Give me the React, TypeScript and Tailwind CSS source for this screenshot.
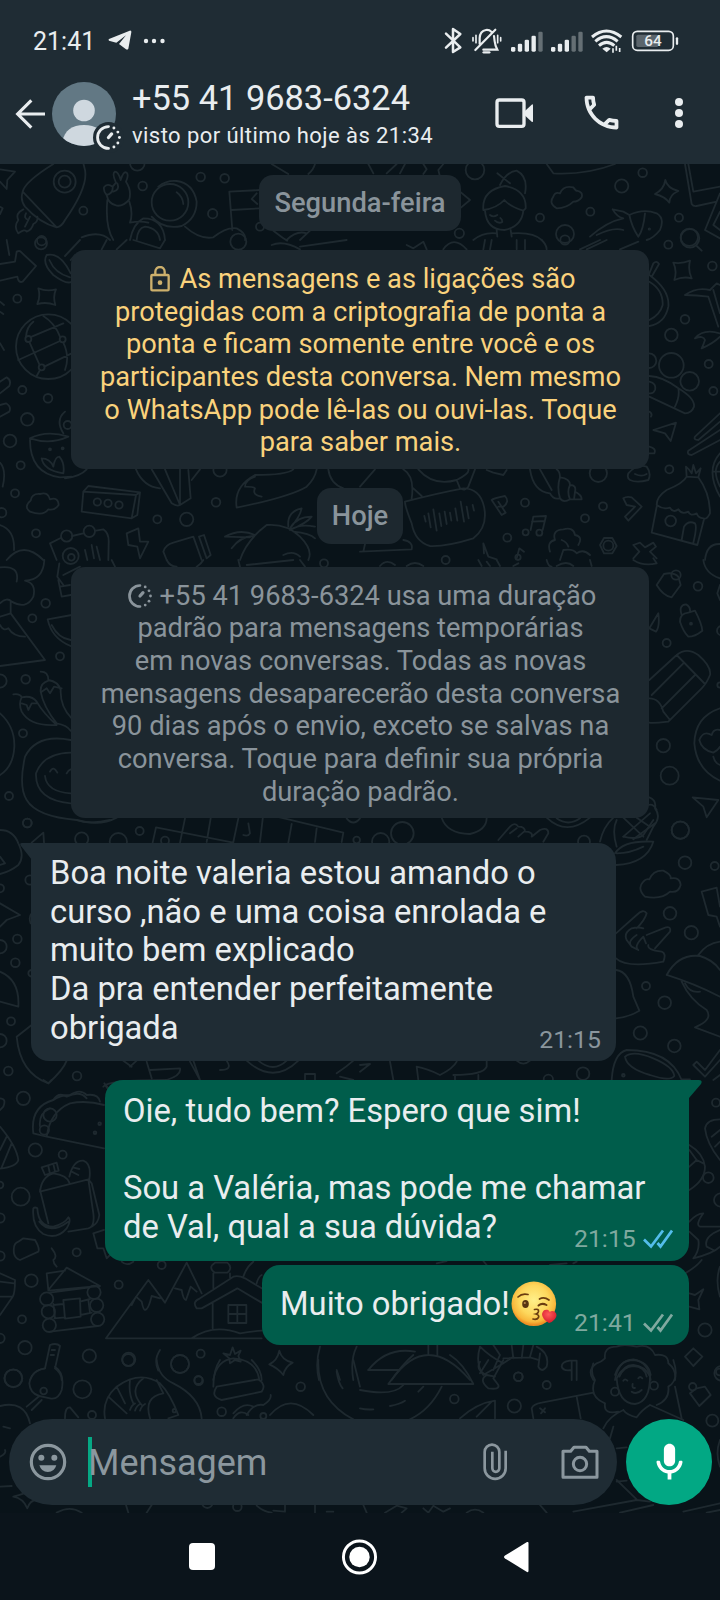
import React from 'react';

type Circle = [number, number, number];

interface DoodleTile {
  x: number;
  y: number;
  d: string;
  circles: Circle[];
}

// Wallpaper doodles, every tile is drawn at three times its size
const tiles: DoodleTile[] = [
  {
    x: 0,
    y: 0,
    d: 'M0 508L45 515L22 540L20 567L0 545M0 620L8 625L0 642M160 492Q75 545 68 575Q60 600 75 620Q120 670 170 682Q185 680 195 660Q265 560 255 510L250 490M68 575L170 682M70 628Q45 640 55 660Q40 680 55 700Q75 685 80 695Q95 690 100 672Q115 665 112 650M78 640Q70 655 85 660M90 650Q80 670 75 680M320 585Q310 575 312 562Q322 548 338 560L348 548Q335 520 345 515Q355 515 362 540Q370 512 380 518Q387 525 378 545Q395 570 388 598Q370 620 350 617Q325 612 320 585ZM320 585q20 -5 18 -25M340 575q20 -5 12 -25M322 600Q315 680 340 720M388 605Q400 640 390 668Q420 662 445 668M530 577Q548 590 550 612M455 650Q490 690 545 678Q590 655 590 605Q580 550 530 543Q500 540 475 560M390 720Q400 670 430 655Q490 655 495 720M410 720Q412 685 435 680Q475 685 480 720M555 680Q600 720 640 712Q680 680 710 685Q740 700 735 720M688 575L780 570M695 630L780 625M688 575L697 690M770 580L755 597L772 612M815 492L865 522M945 492Q940 510 925 522M245 712Q300 690 330 720M820 692Q870 730 860 720Q890 690 920 700M930 692L900 720',
    circles: [[194, 545, 33], [194, 545, 18], [510, 607, 55], [250, 632, 12], [428, 558, 13], [602, 531, 13], [674, 535, 13], [638, 641, 14], [125, 722, 14], [412, 490, 22], [780, 680, 12]],
  },
  {
    x: 360,
    y: 0,
    d: 'M25 492L40 520M80 520L110 492M120 520L135 492M190 492L200 508L190 522M250 492L235 510L240 530M300 575L330 600L300 625M560 492L580 520Q680 525 765 492M420 555Q440 515 470 512Q505 530 495 580M412 520L450 550M370 630Q365 570 435 558Q500 570 497 625L490 632Q450 620 433 600Q410 625 370 630M375 632Q380 690 433 690Q485 680 490 632M390 645q10 8 22 0M405 662q10 10 22 4q0 -8 -6 -12M410 690L412 710M452 690L455 710M340 720Q370 695 410 700M455 700Q520 695 545 720M590 625Q565 610 580 590Q585 575 600 580Q610 555 640 562Q650 575 650 572Q670 575 665 592Q655 605 640 605Q620 625 590 625ZM916 540Q922 565 955 573Q928 585 928 608Q915 590 885 582Q912 568 916 540ZM758 628L790 635L808 645Q850 625 890 640Q915 655 900 690Q880 715 860 720M758 628Q770 650 790 655Q740 665 690 710M808 645Q815 680 835 710Q850 690 855 640M710 705Q760 680 790 690M975 492L995 612Q1000 620 1010 618L1070 605M985 492L1000 575L1080 560M1080 580L1035 690L1080 715M1080 635L1060 675L1080 690',
    circles: [[345, 510, 28], [848, 518, 13], [785, 558, 20], [691, 635, 12], [540, 653, 12], [615, 702, 27], [957, 653, 12], [988, 712, 26], [298, 700, 14], [868, 687, 2]],
  },
  {
    x: 0,
    y: 240,
    d: 'M20 0L28 45M0 72L45 65L50 35Q60 30 65 38L108 78L68 125Q55 130 52 110L0 122M140 45Q125 70 160 105Q200 135 215 125M140 45Q180 35 212 100M148 60Q165 100 210 112M195 48L240 0M212 60L225 45M305 28L320 0M350 28L380 0M400 0L480 25L495 0M815 15Q850 0 900 28M900 20L1040 0M115 145Q140 155 168 148Q158 168 166 195Q140 185 112 192Q122 170 115 145ZM95 290L190 250M55 360L180 303M88 306L118 373M190 308Q210 350 195 390M180 290Q165 250 130 228M78 290Q80 260 100 245M133 380L215 340M120 390L110 408M0 185L12 195M0 215L10 222M0 310L12 330M0 425L20 412Q35 420 28 438L0 460M0 495L18 490Q35 500 28 515L0 530M90 595Q140 570 205 590Q150 615 90 595M90 600Q90 700 180 712L215 710M125 655Q130 690 190 700M125 655Q150 655 160 680Q165 650 178 650Q195 670 190 700M195 515Q165 540 190 580M195 715Q240 710 260 688M0 668Q20 690 8 740M90 815Q70 800 92 782Q95 760 120 762Q145 755 150 778Q175 770 176 795Q165 812 145 808Q130 830 90 815ZM250 755L245 815L395 835L408 765ZM250 755L265 738L420 757L408 765M420 757L412 825L395 835M408 688Q430 740 480 745M455 688L515 790Q530 800 540 795L495 688M540 688V795L572 775L565 690M575 720L600 688M710 803Q870 770 920 740Q945 715 950 688M710 803Q700 740 765 705M765 710q-30 10 -30 30q25 0 30 5q-10 20 20 25M765 705Q860 705 880 688M985 688Q990 730 1030 745M182 894L150 910L170 960M216 888L250 880M288 872L310 868Q328 880 326 910L325 960M255 930L262 960M275 915L282 955M290 920L300 960M380 880L415 865L420 905L445 905L420 955L412 920L385 915ZM0 855Q45 870 42 930M20 960Q70 900 130 960M500 960L490 935Q495 915 520 908L580 890L605 960M597 890L612 885L632 945L620 955ZM675 890Q720 865 765 885M675 890L750 892M695 925Q720 890 760 888M720 960Q740 900 800 855Q860 850 900 890Q940 930 925 960M865 860Q860 815 905 805Q900 830 870 865M870 865Q890 830 935 830Q920 850 870 870M870 870Q900 850 945 860M880 875Q930 880 945 895M850 945Q880 930 900 950',
    circles: [[145, 320, 97], [85, 297, 9], [188, 298, 9], [125, 382, 9], [203, 555, 12], [150, 628, 3], [188, 625, 3], [123, 10, 18], [715, 5, 24], [52, 176, 12], [67, 450, 12], [144, 475, 13], [82, 538, 19], [30, 603, 19], [62, 676, 12], [45, 760, 12], [108, 880, 12], [472, 838, 12], [560, 838, 20], [648, 787, 13], [5, 818, 14], [660, 690, 20], [292, 786, 11], [324, 790, 11], [357, 795, 11], [200, 888, 17], [268, 874, 17], [212, 948, 24], [214, 952, 10]],
  },
  {
    x: 360,
    y: 240,
    d: 'M140 15L160 25L190 5L200 28M250 28Q280 -15 320 28M370 28L375 0M395 0L390 28M470 28V0M495 28V0M545 0Q560 15 560 28M660 28L720 0M680 28L740 0M780 28L835 5M1010 18L1025 32M940 68Q965 72 990 62Q983 90 995 115Q970 108 943 120Q952 92 940 68ZM868 100L880 70Q890 60 897 72L875 110M868 125Q910 150 908 195Q900 225 868 240M868 105Q930 150 925 200Q915 250 868 258M975 165Q1010 140 1050 150L1070 130L1080 135M975 165Q1010 165 1045 170L1075 260M1060 150L1080 220M1005 295Q1030 265 1080 280M1005 295Q1030 285 1035 300Q1030 315 1025 325Q1060 310 1080 290M868 408Q910 410 955 445Q1005 475 1002 500Q995 520 975 520L868 470M955 445Q960 470 945 500M868 425Q890 430 885 450Q880 462 868 460M868 515q10 5 5 15M880 570L948 548L932 603L915 580ZM1080 520L1005 590Q1000 600 1015 600L1080 545M1080 570L985 632Q980 645 995 645L1080 600M868 620Q890 625 883 640L868 640M805 700Q830 670 860 680Q875 700 865 720Q830 730 810 720Q800 715 805 700M825 702q20 10 35 0M1080 640Q1035 690 1080 770M1080 665Q1055 690 1080 740M1062 695H1080M510 688Q520 755 570 760Q580 780 600 775Q610 790 630 778L665 778Q665 765 645 755Q650 735 630 735Q630 715 600 712Q600 695 590 688M540 688L575 750M600 712Q590 740 600 775M630 735Q620 755 630 778M645 755L642 778M890 795Q890 770 920 750Q970 730 980 710L1015 712Q1050 760 1050 820Q1040 840 1030 835Q1015 835 1010 820Q990 830 985 815Q965 825 955 808Q940 820 930 803Q910 810 890 795M890 800L875 878L1012 915L1032 838M965 900L972 860Q985 840 1005 850Q1012 860 1000 908M980 710L978 680Q990 690 995 700L1000 675L1008 700L1022 685L1015 712M135 785Q230 760 310 745Q360 745 372 800Q385 860 340 895Q260 920 210 918Q165 905 155 850Q135 800 135 785M193 828L197 845M205 820L212 862M220 808L230 872M238 820L244 858M254 815L260 852M270 818L274 842M286 805L292 842M302 785L312 845M320 800L326 835M338 795L342 812M130 688Q165 710 155 775M160 745L185 768M175 688Q220 740 290 720Q330 700 325 688M290 720L300 745Q315 755 325 740L345 688M45 688L0 740M380 690L400 698L430 705L440 690M395 780Q400 775 435 768Q450 785 430 800L415 800M395 780L425 825L437 818L415 785M512 870L520 830L558 828L548 870M516 845L555 843M790 775Q800 768 815 772L845 800L805 842L795 830L825 800L800 795ZM570 935Q560 905 585 900Q575 870 610 868Q640 860 645 885Q670 890 655 915M600 960L610 930Q640 925 650 940Q670 925 690 945M605 900Q620 905 625 920M720 915L732 894L757 894L770 918L757 940L732 940ZM820 915L840 908L855 922L880 908L888 920L870 935L890 955M820 915L838 935L820 955M1035 960Q1040 910 1080 912M0 935L155 928Q160 905 130 900M10 935L15 912M370 910L385 950L410 958M370 910L372 940M470 955L478 925L492 935',
    circles: [[990, -5, 28], [925, 14, 12], [1057, 78, 13], [975, 238, 13], [934, 285, 19], [934, 376, 37], [989, 424, 28], [1046, 372, 12], [1060, 453, 12], [928, 688, 12], [495, 788, 12], [729, 799, 12], [675, 835, 12], [442, 893, 12], [867, 362, 22], [715, 700, 26], [932, 843, 16], [497, 877, 9], [538, 878, 9], [745, 917, 15], [474, 952, 8], [615, 0, 14]],
  },
  {
    x: 0,
    y: 560,
    d: 'M0 170L32 160L135 300L0 318M32 160V125M0 130Q20 110 35 125Q80 150 100 110Q110 70 75 62Q130 60 133 0M0 22Q60 15 50 65M0 195Q10 215 25 205Q40 230 75 230M178 10L172 50L190 75M175 60L185 110L212 105M180 80L210 75M190 45L240 20M143 178L215 165M143 178Q155 235 212 258M155 195Q175 235 212 240M122 335Q145 335 145 360Q175 365 182 390Q180 440 215 475M122 395Q120 370 145 362M122 395Q130 440 170 490Q200 495 212 512M40 403Q60 400 65 412Q95 405 110 425Q130 460 170 495Q90 500 65 455Q55 430 65 412M125 395L140 385L150 400L162 380L185 385M65 430L80 435L85 450L95 430L110 430M0 460Q45 500 43 560Q40 620 0 645M212 540Q110 520 75 590Q55 680 80 720Q110 770 230 780Q300 800 350 773M212 578Q130 580 108 640Q105 720 212 730M135 648Q140 695 212 700M150 635Q160 615 172 638M200 640Q205 630 212 628M345 20L335 0M500 0Q510 20 530 20M590 20Q605 10 610 0M715 0L720 20M740 15L880 0M900 0L915 20',
    circles: [[137, 130, 13], [97, 175, 12], [180, 289, 12], [77, 358, 13], [0, 363, 20], [69, 520, 12], [27, 708, 12], [82, 789, 13], [972, 10, 12]],
  },
  {
    x: 360,
    y: 560,
    d: 'M60 18Q80 -5 105 15M140 18Q165 0 190 18M355 0L365 18M380 5L390 18M410 0L420 18M460 18L475 10M560 0Q565 20 575 20M590 18Q620 0 640 18M690 0L695 18M820 0Q850 20 890 10L880 -5M1030 0Q1035 40 1080 55M890 75L912 42Q940 35 955 50L962 75L935 112Q910 108 890 75ZM960 185Q960 160 985 158L1005 152Q1025 190 1027 212Q1005 230 985 230Q970 215 960 185ZM965 165Q955 135 978 133Q992 140 990 155M868 205L895 160Q900 200 888 215ZM868 360L950 285Q980 260 1015 285Q1055 320 1050 345Q1040 370 1025 385L925 485Q880 490 868 488M868 415Q900 415 910 455L930 480M950 285L1035 372M970 310L875 405M1005 345L905 445M1080 445Q1005 470 1003 550Q1010 630 1080 662M1080 510Q1060 505 1055 525Q1030 510 1018 540Q1025 570 1060 578Q1075 570 1080 560M1060 590Q1065 610 1080 615M1080 75L1072 100L1080 120M998 712L1075 720L1040 772L1030 740ZM868 712Q890 720 885 745Q905 770 880 800L860 840M865 735Q880 730 890 750M720 845Q730 800 760 773M770 780Q755 810 770 860M790 773L850 830M830 773L870 800M870 760L790 830M885 790L820 838M245 773Q260 820 330 822Q380 810 380 773M560 773Q620 830 690 773M590 775q35 25 70 0M415 840L450 800Q465 785 475 800Q495 800 495 815Q520 815 515 830L540 810Q565 800 565 820L550 845M450 820L470 805M475 830L492 815',
    circles: [[257, 0, 12], [1014, 79, 13], [1085, 212, 14], [1080, 375, 8], [920, 249, 12], [910, 557, 20], [929, 647, 27], [961, 811, 26], [672, 845, 18], [127, 820, 34], [62, 845, 26], [948, 45, 14], [993, 191, 3]],
  },
  {
    x: 0,
    y: 820,
    d: 'M0 30Q40 30 55 70Q75 110 55 135Q30 155 0 162M0 110L15 130L0 135M95 68L130 38L132 68M458 68L468 22L700 68M555 -5L540 68M632 -5L620 66M715 -5L700 66M790 -20L780 66M790 -20L1030 38L1025 66M875 12L865 68M950 25L945 66M745 10L750 40Q745 50 730 45M1040 -5Q1060 20 1080 -5M230 0Q270 15 330 0M0 250L60 285L20 300L0 320M0 455Q60 480 55 560L0 545M95 280Q85 290 92 310M95 615L50 650Q60 760 145 790Q190 750 200 722M310 800Q320 780 500 780Q545 765 540 745L450 750M440 725L455 775M390 740L410 722M315 795L330 815M370 722L395 740M570 725L600 780L580 722M680 722Q700 750 660 750M740 722Q820 795 895 722M775 722Q820 760 860 722M915 780L915 762L945 762L945 780M1010 760Q1040 740 1060 722M1020 770L1060 780M160 840Q175 815 200 830Q240 810 260 835',
    circles: [[419, 33, 12], [245, 57, 20], [355, 65, 26], [82, 9, 13], [495, 62, 12], [0, 205, 12], [90, 180, 14], [52, 357, 13], [0, 380, 20], [46, 428, 13], [33, 604, 12], [0, 662, 20], [25, 753, 13], [231, 768, 13], [95, 460, 10], [1070, 60, 10]],
  },
  {
    x: 360,
    y: 820,
    d: 'M855 230Q830 205 850 185Q858 175 868 178Q880 150 910 152Q935 165 932 175Q960 170 962 195Q955 220 930 215Q905 240 855 230M765 100Q790 60 880 65Q860 130 768 135M770 100Q810 100 850 80M790 50Q830 60 850 45L880 0M1025 215L1070 203L1080 260M1025 215L1045 285L1070 290L1080 320M768 340L830 285Q850 265 860 280Q855 300 830 325M800 360Q790 340 815 325Q835 320 850 325M815 380Q800 365 830 345M835 390Q820 380 850 350L858 370M800 360L815 380L835 390M860 345L910 325Q935 315 930 335L885 385M768 415Q800 445 910 425Q920 400 905 395Q860 390 865 375M768 450Q810 455 820 530L838 572Q810 590 768 595M920 465Q955 400 1020 408Q1060 420 1080 450M920 465Q1000 490 1080 530M1015 405Q1040 370 1080 365M965 485Q990 540 1040 570Q1060 600 1005 622L1080 650M975 490Q990 520 1020 515M1080 690L1035 750L1010 725L1000 735L1035 770L1080 720M755 780Q760 700 800 690Q930 690 965 780M795 710Q820 690 880 715Q940 740 943 768Q930 785 870 765Q800 745 795 710ZM965 778H990M0 735L30 732L0 755M90 725L100 780M170 740L175 780M170 740Q200 745 240 765Q280 745 290 725M280 765Q370 765 380 740L380 722M285 765V780M355 765V780M470 722Q490 740 510 722M1060 780L1080 765',
    circles: [[961, 30, 26], [975, 128, 19], [1064, 138, 12], [930, 280, 19], [994, 338, 20], [858, 498, 12], [914, 548, 19], [841, 639, 20], [943, 678, 19], [669, 761, 19], [790, 766, 4], [565, 778, 14]],
  },
  {
    x: 0,
    y: 1080,
    d: 'M130 0L145 10L155 0M0 55Q20 55 10 80L0 90M100 160Q90 80 160 60Q180 45 210 45Q240 25 260 45Q295 40 300 65M100 160L140 170Q150 95 210 70Q260 60 312 75M140 170L312 205M120 140Q115 100 150 85M0 140Q50 200 55 240Q50 260 0 266M20 170L0 210M35 190L5 262M313 10L330 30M120 335Q125 290 160 280Q200 285 208 308M120 335L265 298L280 400Q285 440 265 445L205 455M120 330L145 430M265 298L275 310L298 405Q295 430 275 440M125 262L170 248L176 272L135 285ZM145 258l5 24M160 252l5 22M208 290Q220 240 250 242Q275 250 268 298M215 275l20 10M218 262l20 5M100 385Q105 380 112 385Q115 440 160 440Q195 430 205 412Q215 420 200 445Q170 480 130 462Q95 440 100 385M118 425Q150 465 205 425M42 520Q38 490 55 485L70 475L105 480Q120 505 115 515L60 540Q45 535 42 520ZM312 450L280 460L292 505L310 505L320 535L330 525M365 545Q380 560 400 545M155 505Q175 530 160 540Q160 550 170 560M140 580L195 572M145 630L200 563L300 618L145 632ZM140 580L145 630M150 638L270 622M160 675L190 672M240 665L270 657M163 715L195 712M242 705L275 698M150 755L293 738M160 672L165 715M265 660L270 698M190 660L240 655L242 710L195 716ZM0 580L45 600Q45 640 38 650L0 705M0 605L42 610M0 650H38M318 775L445 600L495 668L560 548L605 640M318 775H785M395 675L408 650L425 665Q430 690 435 690Q445 690 455 648L480 655M525 625L545 630Q550 660 558 660L572 620L590 635M590 685Q575 665 600 655L700 590Q715 585 735 595L785 625M590 685L605 685L712 625L785 668M638 670V745M685 675h54v54h-54ZM712 675v54M685 702h54M575 775Q640 730 720 760Q750 755 785 752M640 580V625M690 580V592M645 548H682Q700 563 682 578H645Q622 563 645 548M730 590Q740 560 760 545M770 610Q775 590 785 585M135 865L150 795Q170 788 180 798L165 865M155 810h10M152 825h10M135 865Q100 870 90 900M165 865Q185 880 185 900M480 810Q460 840 475 872M640 900Q650 840 700 835Q770 840 778 900M670 820L690 825L698 802L705 822L722 812L715 828L722 845L705 840L690 850L688 835ZM838 812Q845 840 878 848Q855 860 850 885Q835 865 808 853Q832 842 838 812ZM960 800Q945 850 957 900M1070 800Q1050 840 1060 900M1010 870L1020 900',
    circles: [[70, 55, 20], [106, 210, 20], [188, 224, 12], [62, 350, 27], [230, 517, 12], [0, 414, 14], [0, 315, 10], [0, 528, 14], [94, 602, 19], [356, 614, 12], [66, 718, 12], [0, 775, 14], [75, 803, 20], [268, 828, 20], [386, 838, 20], [485, 555, 12], [540, 852, 27], [602, 821, 12], [40, 895, 26], [595, 900, 12], [150, 105, 20], [133, 150, 14], [299, 131, 4], [285, 158, 4], [140, 657, 20], [282, 637, 20], [145, 695, 20], [290, 676, 20], [148, 736, 20], [293, 718, 20]],
  },
  {
    x: 360,
    y: 1080,
    d: 'M1035 145Q1040 118 1080 118M1035 145Q1040 190 1080 240M1055 170L1080 150M1065 200L1080 185M988 195Q1030 220 1035 260Q1035 300 988 330M988 210L1010 240L988 260M1010 240L1030 250M988 425Q1010 400 1030 400Q1005 435 1020 440L1080 440M988 455L1015 480Q1020 510 1000 535M1080 450Q1030 470 1040 500L1060 510M1000 535Q1060 520 1080 500M975 580Q1010 560 1025 540M1080 560Q1065 600 1080 650M988 640L1005 645L1030 628L1015 660L1018 688L988 680M975 830L1000 805L1027 830L1000 858ZM25 870Q80 800 165 815M25 870H110M95 900Q200 750 330 900M205 795V825M232 795V825M360 800Q345 850 370 885L430 850L460 830M360 800Q390 830 430 850M400 795L420 825L400 870M530 800Q570 820 560 860Q545 880 535 860L540 820M430 835L510 832L535 840M455 795L460 835M490 795L485 835M520 795L510 830M650 842H630Q605 845 605 860Q610 875 635 870M635 842V900M650 842V900M700 900Q680 870 710 850Q725 845 735 835Q730 800 770 800Q790 790 830 800Q870 790 885 825Q925 820 925 850Q950 870 945 900M765 900Q775 840 820 838Q865 845 872 900M778 890Q790 860 820 858Q855 860 860 890M230 550L260 543M370 543L380 555M570 555L620 550M640 550L650 545',
    circles: [[1068, 68, 12], [1045, 293, 16], [1035, 750, 20], [475, 890, 13], [1082, 360, 20], [1085, 880, 22]],
  },
  {
    x: 0,
    y: 1360,
    d: 'M165 20Q195 40 185 90Q175 120 150 115L118 108M135 25Q95 30 88 70Q90 100 118 108L80 140M125 120L95 150M470 0Q475 50 520 70Q600 110 605 175M0 138Q75 120 90 190M10 200L30 205M0 290Q20 280 15 270M0 380L35 378M195 175Q195 140 210 142L235 172M315 175Q305 120 350 80Q420 30 480 70Q510 100 535 165L505 175M350 80L375 130M325 110L380 160M390 60Q385 100 400 130M430 55Q385 90 425 135M450 175Q430 110 490 100L470 60M390 150q5 -15 15 -20M405 152q5 -15 15 -20M420 152q5 -15 15 -20M640 80Q640 30 660 0M755 0Q785 30 785 60M650 80L775 58Q800 75 785 95L665 120Q630 110 650 80M700 175Q720 145 745 165M740 165Q760 130 790 135Q815 120 812 105M700 160Q730 125 760 140M810 165Q870 95 940 165M955 0Q950 120 1060 178M1010 35Q1015 70 1028 85M1060 0L1080 80M40 410Q75 400 90 395M40 410Q70 415 82 445Q90 420 110 420M170 458Q210 435 245 458M378 435L385 458M455 435L440 458M770 437Q790 455 815 458M820 452L855 455V435M945 435V458M980 455h20',
    circles: [[131, 93, 10], [40, 55, 27], [247, 88, 27], [385, 0, 18], [540, 12, 27], [596, 62, 13], [902, 80, 13], [665, 155, 13], [276, 165, 12], [622, 428, 16], [712, 440, 13], [523, 152, 5], [790, 168, 9]],
  },
  {
    x: 360,
    y: 1360,
    d: 'M25 30H115M85 72Q130 10 160 -15M85 72H340Q310 10 270 -15M0 90Q100 110 130 75M0 145Q20 150 40 148M245 80Q210 150 150 178M90 138Q120 132 135 122M175 95L190 80M300 175Q350 130 405 122L405 175M350 170L395 125M360 5Q345 30 380 45Q355 60 385 85Q420 90 415 75L400 55L430 0M385 0L360 40M380 45L405 50M520 175L515 145Q520 132 545 128L700 98M650 110L662 175M540 145l15 12M555 145l-12 15M765 45Q780 0 820 0Q865 5 872 45M770 55Q775 130 825 132Q870 125 870 50M770 55Q790 15 820 15Q855 18 870 50M700 10Q690 40 705 60Q685 110 735 130Q730 165 775 155M940 0Q960 60 925 80Q930 120 890 135M790 62q5 -8 12 0M835 55q5 -8 12 0M815 95Q830 105 845 90M818 72Q815 85 825 84M790 150Q800 165 830 172Q845 150 870 135M730 205Q745 170 790 150M870 135L970 180M750 235L760 200M770 265L800 262M945 80L965 175M990 100L1010 85L1035 80L1052 105L1018 138ZM770 360L830 418M770 365L800 362M640 455L830 420L870 425M780 458L880 435M970 455L1080 430M1040 458L1080 450M1080 240Q1065 280 1080 320M10 435L20 458M75 458L110 437L140 445L125 458M190 445L205 458L220 437L250 455L270 445M320 458Q345 440 370 458M540 435L560 458',
    circles: [[475, 50, 13], [560, 75, 12], [463, 138, 20], [283, 117, 13], [998, 80, 11], [1057, 182, 18], [1078, 36, 10], [765, 95, 12], [882, 77, 12]],
  },
];

function Wallpaper() {
  return (
    <svg className="absolute inset-0" width="720" height="1513" viewBox="0 0 720 1513" fill="none" stroke="#1e292f" aria-hidden="true">
      {tiles.map((t) => (
        <g key={`${t.x}-${t.y}`} transform={`translate(${t.x} ${t.y}) scale(0.33333)`} strokeWidth="5.5" strokeLinecap="round" strokeLinejoin="round">
          <path d={t.d} />
          {t.circles.map(([cx, cy, r], i) => (
            <circle key={i} cx={cx} cy={cy} r={r} />
          ))}
        </g>
      ))}
    </svg>
  );
}

function TimerIcon({ size, className }: { size: number; className?: string }) {
  return (
    <svg width={size} height={size} viewBox="0 0 24 24" fill="none" stroke="currentColor" strokeLinecap="round" className={className}>
      <path d="M12 1.5a10.5 10.5 0 0 0 0 21" strokeWidth="2.7" />
      <path d="M12 12l3-3.4" strokeWidth="3.2" />
      <g fill="currentColor" stroke="none">
        <circle cx="17.2" cy="2.9" r="1.4" />
        <circle cx="21" cy="6.8" r="1.4" />
        <circle cx="22.5" cy="12" r="1.4" />
        <circle cx="21" cy="17.2" r="1.4" />
        <circle cx="17.2" cy="21.1" r="1.4" />
      </g>
    </svg>
  );
}

function Signal({ bars }: { bars: number }) {
  const heights = [14, 24, 36, 48, 60];
  return (
    <svg width="40" height="27" viewBox="0 79 120 81" fill="#e9edef">
      {heights.map((h, i) => (
        <rect key={i} x={12 + i * 20.5} y={153 - h} width="13" height={h} rx="4" opacity={i < bars ? 1 : 0.35} />
      ))}
    </svg>
  );
}

function StatusBar() {
  return (
    <div className="flex h-[81px] items-center pl-[33px] pr-[40px]">
      <span className="mt-[2px] text-[25px] leading-none text-[#e9edef]">21:41</span>
      <svg width="24" height="21" viewBox="325 92 72 63" fill="#e9edef" className="ml-[13px]">
        <path d="M328 119L390 94Q396 93 395 99L386 148Q383 153 378 149L358 134L379 108L350 130L328 124Q325 121 328 119Z" />
      </svg>
      <svg width="24" height="6" viewBox="0 0 24 6" fill="#e9edef" className="ml-[11px]">
        <circle cx="3" cy="3" r="2.2" />
        <circle cx="11" cy="3" r="2.2" />
        <circle cx="19.5" cy="3" r="2.2" />
      </svg>
      <div className="ml-auto flex items-center">
        <svg width="23" height="27" viewBox="252 79 69 81" fill="none" stroke="#e9edef" strokeWidth="7.5" strokeLinejoin="round" strokeLinecap="round">
          <path d="M258 99L301 140L279 154V85L301 100L258 141" />
        </svg>
        <svg width="40" height="27" viewBox="321 79 120 81" fill="none" stroke="#e9edef" strokeWidth="6.5" strokeLinecap="round">
          <path d="M339 111V121M413 104V126M422 111V121M348 104V126" strokeWidth="5" />
          <path d="M359 130V112Q360 91 378 88Q388 87 394 93M402 106Q403 120 407 136L412 147H370M406 87L346 148" />
          <path d="M371 155H388" strokeWidth="7" />
        </svg>
        <Signal bars={4} />
        <Signal bars={3} />
        <svg width="40" height="27" viewBox="681 79 120 81" fill="none" stroke="#e9edef" strokeWidth="9">
          <path d="M696 109Q739 73 784 109M706 122Q739 94 773 122M717 135Q740 115 763 135" />
          <path d="M727 144Q740 134 752 144L740 155Z" fill="#e9edef" stroke="none" />
          <path d="M759 143V156M769 135V150M779 142V154" strokeWidth="5" />
        </svg>
        <svg width="53" height="27" viewBox="801 79 159 81" fill="none">
          <rect x="818" y="92" width="122" height="57" rx="14" stroke="#e9edef" strokeWidth="5" />
          <rect x="829" y="102" width="66" height="37" rx="5" fill="#5b656c" />
          <path d="M951 113V129" stroke="#e9edef" strokeWidth="7" strokeLinecap="round" />
          <text x="879" y="137" textAnchor="middle" fontSize="46" fontWeight="500" fill="#e9edef">
            64
          </text>
        </svg>
      </div>
    </div>
  );
}

function ChatHeader() {
  return (
    <header className="relative z-10 h-[164px] bg-[#1f2c34]">
      <StatusBar />
      <div className="flex h-[66px] items-center pl-[15px]">
        <svg width="32" height="30" viewBox="45 295 96 90" fill="none" stroke="#e9edef" strokeWidth="9.5">
          <path d="M135 340H54M94 299L53 340L94 381" />
        </svg>
        <div className="relative ml-[5px]">
          <svg width="64" height="64" viewBox="0 0 64 64" className="block">
            <defs>
              <clipPath id="avatar">
                <circle cx="32" cy="32" r="32" />
              </clipPath>
            </defs>
            <g clipPath="url(#avatar)">
              <rect width="64" height="64" fill="#627884" />
              <circle cx="32" cy="28.5" r="10.8" fill="#cfd8df" />
              <path d="M10 60C13 48 20 43 32 43s19 5 22 17L48 66H12Z" fill="#cfd8df" />
            </g>
          </svg>
          <div className="absolute -right-[8px] -bottom-[7px] rounded-full bg-[#1f2c34] p-[3px]">
            <TimerIcon size={25} className="text-[#e9edef]" />
          </div>
        </div>
        <div className="ml-[16px] flex flex-col whitespace-nowrap text-[#e9edef]">
          <span className="-mt-[1px] text-[34.4px] leading-[40px]">+55 41 9683-6324</span>
          <span className="mt-[4px] text-[22px] leading-[28px] tracking-[0.43px]">visto por último hoje às 21:34</span>
        </div>
      </div>
    </header>
  );
}

function HeaderActions() {
  return (
    <div className="absolute top-[90px] right-[32px] z-20 flex items-center">
      <svg width="40" height="40" viewBox="402 280 120 120" fill="none" stroke="#e9edef">
        <rect x="411" y="301" width="81" height="79" rx="7" strokeWidth="10" />
        <path d="M494 335L515 315Q519 312 519 317V364Q519 369 515 366L494 347Z" fill="#e9edef" stroke="none" />
      </svg>
      <svg width="45" height="45" viewBox="0 0 24 24" fill="#e9edef" className="ml-[45px]">
        <path d="M6.54 5c.06.89.21 1.76.45 2.59l-1.2 1.2c-.41-1.2-.67-2.47-.76-3.79h1.51m9.86 12.02c.85.24 1.72.39 2.6.45v1.49c-1.32-.09-2.59-.35-3.8-.75l1.2-1.19M7.5 3H4c-.55 0-1 .45-1 1 0 9.39 7.61 17 17 17 .55 0 1-.45 1-1v-3.49c0-.55-.45-1-1-1-1.24 0-2.45-.2-3.57-.57-.1-.04-.21-.05-.31-.05-.26 0-.51.1-.71.29l-2.2 2.2c-2.83-1.45-5.15-3.76-6.59-6.59l2.2-2.2c.28-.28.36-.67.25-1.02C8.7 6.45 8.5 5.25 8.5 4c0-.55-.45-1-1-1z" />
      </svg>
      <svg width="18" height="32" viewBox="0 0 18 32" fill="#e9edef" className="ml-[46px]">
        <circle cx="9" cy="5" r="4" />
        <circle cx="9" cy="16" r="4" />
        <circle cx="9" cy="27" r="4" />
      </svg>
    </div>
  );
}

function DatePill({ children }: { children: React.ReactNode }) {
  return (
    <div className="flex h-[56px] items-center self-center rounded-[14px] bg-[#1d282f] px-[15px] pt-[1px] text-[27.3px] font-medium text-[#8a949b]">
      {children}
    </div>
  );
}

function DoubleCheck({ color }: { color: string }) {
  return (
    <svg width="30" height="20" viewBox="0 0 30 20" fill="none" stroke={color} strokeWidth="2.7">
      <path d="M1 10.5L8 17.5L20 1.5M14.5 14L17.5 17.5L29 1.5" />
    </svg>
  );
}

function KissEmoji() {
  return (
    <svg width="46" height="46" viewBox="0 0 46 46" fill="none" className="ml-[1px] inline-block">
      <defs>
        <radialGradient id="face" cx="50%" cy="42%" r="55%">
          <stop offset="0" stopColor="#fff08a" />
          <stop offset="0.6" stopColor="#fdd75c" />
          <stop offset="0.88" stopColor="#f8b83c" />
          <stop offset="1" stopColor="#ef8f23" />
        </radialGradient>
        <radialGradient id="heart" cx="45%" cy="35%" r="60%">
          <stop offset="0" stopColor="#ff5a5a" />
          <stop offset="1" stopColor="#d8202f" />
        </radialGradient>
      </defs>
      <circle cx="22.8" cy="22.8" r="22.3" fill="url(#face)" />
      <g stroke="#6b3d10" strokeWidth="1.7" strokeLinecap="round">
        <path d="M7 16Q11 12 17 13.5" />
        <path d="M28.5 18Q33 15.5 38 19" />
        <path d="M27.5 24.5Q31 21.5 35.5 24" strokeWidth="2" />
        <path d="M23.5 28.5Q28 27.5 27.5 30.5Q27 32.5 25 33Q28.5 34 27.5 36.5Q26 39 22 38" />
      </g>
      <ellipse cx="14.5" cy="23" rx="3.3" ry="4" fill="#5a3512" />
      <circle cx="13.8" cy="22" r="1.1" fill="#b98a4a" />
      <path d="M38 42Q31 38 31 33Q32 28 36.5 28.8Q38 29.3 38.8 31Q41 29 44 31Q47 34 44 38Q41.5 41 38 42Z" fill="url(#heart)" />
    </svg>
  );
}

function MessageLines({ lines }: { lines: string[] }) {
  return (
    <div className="flex flex-col items-start">
      {lines.map((line, i) => (
        <span key={i} className="h-[38.7px]">
          {line}
        </span>
      ))}
    </div>
  );
}

function MessageMeta({ time, check }: { time: string; check?: string }) {
  return (
    <div className="flex items-center text-[24.8px] leading-[28px]">
      <span>{time}</span>
      {check && (
        <span className="ml-auto">
          <DoubleCheck color={check} />
        </span>
      )}
    </div>
  );
}

function InputBar() {
  return (
    <div className="flex h-[86px] items-center gap-[9px] px-[9px]">
      <div className="flex h-full w-[608px] shrink-0 items-center rounded-full bg-[#1f2c34] pr-[17px] pl-[19px]">
        <svg width="40" height="40" viewBox="84 247 120 120" fill="none">
          <circle cx="144" cy="307" r="50" stroke="#8b979e" strokeWidth="9.5" />
          <circle cx="124" cy="294" r="9" fill="#8b979e" />
          <circle cx="163" cy="294" r="9" fill="#8b979e" />
          <path d="M118 317H169Q163 337 143.5 337T118 317Z" fill="#8b979e" />
        </svg>
        <div className="ml-[20px] h-[50px] w-[4px] bg-[#05a884]" />
        <span className="mt-[1px] -ml-[4px] text-[36px] leading-[50px] text-[#8b979e]">Mensagem</span>
        <svg width="28" height="40" viewBox="358 246 84 120" fill="none" stroke="#8b979e" strokeWidth="8" className="ml-auto">
          <path d="M432 272V325A31.5 31.5 0 0 1 369 325V276A22 22 0 0 1 413 276V325A10 10 0 0 1 392 325V275" />
        </svg>
        <svg width="40" height="40" viewBox="596 247 120 120" fill="none" stroke="#8b979e" className="ml-[51px]">
          <path d="M605 275H628L638 263H674L684 275H707V353H605Z" strokeWidth="9" strokeLinejoin="round" />
          <circle cx="656" cy="313" r="20" strokeWidth="9" />
        </svg>
      </div>
      <div className="flex h-[86px] w-[86px] shrink-0 items-center justify-center rounded-full bg-[#02a884]">
        <svg width="45" height="45" viewBox="0 0 24 24" fill="#fff">
          <path d="M12 14c1.66 0 3-1.34 3-3V5c0-1.66-1.34-3-3-3S9 3.34 9 5v6c0 1.66 1.34 3 3 3z" />
          <path d="M18.3 11c.4 0 .7.35.65.75-.46 3.23-2.8 5.7-5.95 6.17V21h-2v-3.08c-3.15-.47-5.49-2.94-5.95-6.17-.05-.4.25-.75.65-.75h.65c.35 0 .6.23.66.57C7.4 14.1 9.4 16 12 16s4.6-1.9 4.99-4.43c.06-.34.31-.57.66-.57z" />
        </svg>
      </div>
    </div>
  );
}

function NavBar() {
  return (
    <nav className="relative z-10 flex h-[87px] items-center bg-[#0b141b] pl-[189px]">
      <div className="h-[27px] w-[26px] rounded-[4px] bg-white" />
      <svg width="37" height="38" viewBox="0 0 38 38" fill="none" className="ml-[126px]">
        <circle cx="19" cy="19" r="16.5" stroke="#fff" strokeWidth="3" />
        <circle cx="19" cy="19" r="10.5" fill="#fff" />
      </svg>
      <svg width="26" height="32" viewBox="0 0 26 32" fill="#fff" className="ml-[125px]">
        <path d="M24 1Q25.5 0.5 25.5 2V30Q25.5 31.5 24 31L2 17.5Q0 16 2 14.5Z" />
      </svg>
    </nav>
  );
}

export default function App() {
  return (
    <div className="relative flex h-[1600px] w-[720px] flex-col overflow-hidden bg-[#091319] font-[Roboto,sans-serif]">
      <Wallpaper />
      <ChatHeader />
      <HeaderActions />

      <main className="relative flex h-[1349px] flex-col pt-[11px]">
        <DatePill>Segunda-feira</DatePill>

        <div className="mt-[19px] flex h-[219px] w-[578px] flex-col items-center justify-center self-center rounded-[14px] bg-[#1d282f] pt-[3px] pl-[1px] text-[27.25px] leading-[32.7px] whitespace-nowrap text-[#fad27c]">
          <span className="ml-[5px] flex items-center">
            <svg width="20" height="26" viewBox="447 75 60 78" fill="none" stroke="currentColor" strokeWidth="7" className="mr-[9px] opacity-80">
              <rect x="451" y="102" width="52" height="46" rx="3" />
              <path d="M463 102V92A14 14 0 0 1 491 92V102" />
              <circle cx="477" cy="125" r="7" fill="currentColor" stroke="none" />
            </svg>
            As mensagens e as ligações são
          </span>
          <span>protegidas com a criptografia de ponta a</span>
          <span>ponta e ficam somente entre você e os</span>
          <span>participantes desta conversa. Nem mesmo</span>
          <span>o WhatsApp pode lê-las ou ouvi-las. Toque</span>
          <span>para saber mais.</span>
        </div>

        <div className="mt-[19px] flex flex-col">
          <DatePill>Hoje</DatePill>
        </div>

        <div className="mt-[23px] flex h-[251px] w-[578px] flex-col items-center justify-center self-center rounded-[14px] bg-[#1d282f] pt-[3px] pl-[1px] text-[27.25px] leading-[32.7px] whitespace-nowrap text-[#8a949b]">
          <span className="ml-[3px] flex items-center">
            <TimerIcon size={24} className="mr-[8px]" />
            +55 41 9683-6324 usa uma duração
          </span>
          <span>padrão para mensagens temporárias</span>
          <span>em novas conversas. Todas as novas</span>
          <span>mensagens desaparecerão desta conversa</span>
          <span>90 dias após o envio, exceto se salvas na</span>
          <span>conversa. Toque para definir sua própria</span>
          <span>duração padrão.</span>
        </div>

        <div className="relative mt-[25px] ml-[31px] h-[218px] w-[585px] rounded-[18px] rounded-tl-none bg-[#1f2c34] pt-[11px] pl-[19px] text-[32.75px] leading-[38.7px] whitespace-pre text-[#e9edef]">
          <svg width="12" height="18" viewBox="0 0 12 18" fill="#1f2c34" className="absolute top-0 -left-[11px]">
            <path d="M2 0H12V17L1 3Q-1 0 2 0Z" />
          </svg>
          <MessageLines
            lines={[
              'Boa noite valeria estou amando o',
              'curso ,não e uma coisa enrolada e',
              'muito bem explicado',
              'Da pra entender perfeitamente',
              'obrigada',
            ]}
          />
          <div className="absolute right-[15px] bottom-[7px] text-[#8a969d]">
            <MessageMeta time="21:15" />
          </div>
        </div>

        <div className="relative mt-[19px] ml-[105px] h-[181px] w-[584px] rounded-[18px] rounded-tr-none bg-[#005d4b] pt-[12px] pl-[18px] text-[32.75px] leading-[38.7px] whitespace-pre text-[#e9edef]">
          <svg width="14" height="19" viewBox="0 0 14 19" fill="#005d4b" className="absolute top-0 -right-[13px]">
            <path d="M0 0H11Q15 0 13 4L1 18H0Z" />
          </svg>
          <MessageLines lines={['Oie, tudo bem? Espero que sim!', '', 'Sou a Valéria, mas pode me chamar', 'de Val, qual a sua dúvida?']} />
          <div className="absolute right-[16px] bottom-[8px] w-[99px] text-[#7fa99f]">
            <MessageMeta time="21:15" check="#53bdeb" />
          </div>
        </div>

        <div className="relative mt-[4px] ml-[262px] flex h-[80px] w-[427px] items-start rounded-[18px] bg-[#005d4b] pt-[16px] pl-[18px] text-[32.75px] leading-[46px] text-[#e9edef]">
          <span>Muito obrigado!</span>
          <KissEmoji />
          <div className="absolute right-[16px] bottom-[8px] w-[99px] text-[#7fa99f]">
            <MessageMeta time="21:41" check="#80a9a0" />
          </div>
        </div>

        <div className="mt-[74px]">
          <InputBar />
        </div>
      </main>

      <NavBar />
    </div>
  );
}
